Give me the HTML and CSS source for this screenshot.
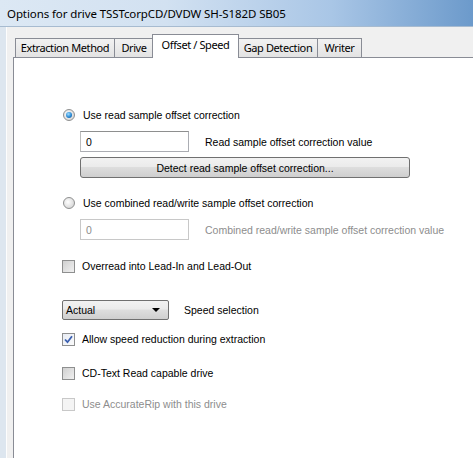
FILE: index.html
```html
<!DOCTYPE html>
<html>
<head>
<meta charset="utf-8">
<link rel="stylesheet" href="styles.css">
</head>
<body>
<div class="window">
  <div class="titlebar"><span class="title">Options for drive TSSTcorpCD/DVDW SH-S182D SB05</span></div>
  <div class="frame">
    <div class="tabs">
      <div class="tab t1">Extraction Method</div>
      <div class="tab t2">Drive</div>
      <div class="tab active">Offset / Speed</div>
      <div class="tab t4">Gap Detection</div>
      <div class="tab t5">Writer</div>
    </div>
    <div class="panel">
      <div class="row r-radio1">
        <span class="radio checked"><span class="dot"></span></span>
        <span class="label">Use read sample offset correction</span>
      </div>
      <div class="row r-input1">
        <div class="input">0</div>
        <span class="label side">Read sample offset correction value</span>
      </div>
      <div class="row r-button">
        <div class="button">Detect read sample offset correction...</div>
      </div>
      <div class="row r-radio2">
        <span class="radio"></span>
        <span class="label">Use combined read/write sample offset correction</span>
      </div>
      <div class="row r-input2">
        <div class="input disabled">0</div>
        <span class="label side grey">Combined read/write sample offset correction value</span>
      </div>
      <div class="row r-check1">
        <span class="check"></span>
        <span class="label">Overread into Lead-In and Lead-Out</span>
      </div>
      <div class="row r-select">
        <div class="select"><span>Actual</span><span class="arrow"></span></div>
        <span class="label sel">Speed selection</span>
      </div>
      <div class="row r-check2">
        <span class="check checked"><svg width="9" height="9" viewBox="0 0 9 9"><path d="M1 4.5 L3.5 7.2 L8 1.2" fill="none" stroke="#3a5fb0" stroke-width="1.8"/></svg></span>
        <span class="label">Allow speed reduction during extraction</span>
      </div>
      <div class="row r-check3">
        <span class="check"></span>
        <span class="label">CD-Text Read capable drive</span>
      </div>
      <div class="row r-check4">
        <span class="check disabled"></span>
        <span class="label grey">Use AccurateRip with this drive</span>
      </div>
    </div>
  </div>
</div>
</body>
</html>
```

FILE: styles.css
```css
html, body {
  margin: 0;
  padding: 0;
  width: 473px;
  height: 458px;
  overflow: hidden;
  background: #f0f0f0;
}
.window {
  width: 473px;
  height: 458px;
  display: flex;
  flex-direction: column;
}
.titlebar {
  height: 27px;
  box-sizing: border-box;
  background: linear-gradient(to right, #dce8f4 0%, #d2e1f1 35%, #a9c6e6 70%, #6c9acb 100%);
  border-bottom: 1px solid #a7bbd0;
  padding-left: 7px;
  display: flex;
  align-items: center;
}
.title {
  font-family: "Noto Sans", sans-serif;
  font-size: 11.5px;
  color: #000;
  padding-top: 1px;
  letter-spacing: -0.1px;
}
.frame {
  flex: 1;
  display: flex;
  flex-direction: column;
  background: #f0f0f0;
  border-left: 1px solid #fdfdfd;
  margin-left: 6px;
  box-shadow: -6px 0 0 #dde6ef;
}
.tabs {
  display: flex;
  align-items: flex-end;
  padding-left: 8px;
  padding-top: 7px;
  height: 23px;
  box-sizing: content-box;
  position: relative;
  z-index: 2;
}
.tab {
  font-family: "Noto Sans", sans-serif;
  font-size: 11px;
  letter-spacing: -0.4px;
  white-space: nowrap;
  color: #000;
  height: 19px;
  box-sizing: border-box;
  border: 1px solid #898c95;
  border-bottom: none;
  background: linear-gradient(#f2f2f2, #e3e3e3);
  display: flex;
  align-items: center;
  justify-content: center;
  margin-right: -1px;
  line-height: 1;
  padding-bottom: 1px;
}
.t1 { width: 100px; }
.t2 { width: 40px; }
.t4 { width: 80px; }
.t5 { width: 45px; }
.tab.active {
  width: 87px;
  height: 24px;
  background: #fff;
  margin-bottom: -1px;
  margin-left: -1px;
  margin-right: -1px;
  align-items: flex-start;
  padding-top: 4px;
  position: relative;
  z-index: 3;
}
.panel {
  flex: 1;
  margin-left: 6px;
  background: #fff;
  border-left: 1px solid #898c95;
  border-top: 1px solid #898c95;
  display: flex;
  flex-direction: column;
  position: relative;
  z-index: 1;
  font-family: "Liberation Sans", sans-serif;
  font-size: 10.5px;
  color: #000;
}
.row {
  display: flex;
  align-items: center;
  padding-left: 48px;
}
.label { white-space: nowrap; }
.grey { color: #8d8d8d; }
.r-radio1 { margin-top: 50px; height: 14px; }
.r-radio1 .label, .r-radio2 .label { margin-left: 8px; }
.r-input1 { margin-top: 9px; padding-left: 66px; }
.input {
  width: 109px;
  height: 21px;
  box-sizing: border-box;
  border: 1px solid #abadb3;
  border-top-color: #8e8f8f;
  border-left-color: #bcbcbc;
  background: #fff;
  padding-left: 5px;
  display: flex;
  align-items: center;
}
.input.disabled { color: #8d8d8d; border-color: #c8c8c8; }
.side { margin-left: 16px; }
.r-button { margin-top: 5px; padding-left: 66px; }
.button {
  width: 330px;
  height: 21px;
  box-sizing: border-box;
  border: 1px solid #707070;
  border-radius: 3px;
  background: linear-gradient(#f2f2f2 0%, #ebebeb 45%, #dddddd 50%, #cfcfcf 100%);
  display: flex;
  align-items: center;
  justify-content: center;
}
.r-radio2 { margin-top: 18px; height: 14px; }
.r-input2 { margin-top: 9px; padding-left: 66px; }
.r-check1 { margin-top: 19px; height: 14px; }
.r-select { margin-top: 27px; }
.r-check2 { margin-top: 12px; height: 14px; }
.r-check3 { margin-top: 20px; height: 14px; }
.r-check4 { margin-top: 17px; height: 14px; }
.radio {
  width: 12px;
  height: 12px;
  box-sizing: border-box;
  border-radius: 50%;
  border: 1px solid #8e8f8f;
  background: radial-gradient(circle at 40% 40%, #ffffff 0%, #e0e0e0 60%, #cdcdcd 100%);
  display: flex;
  align-items: center;
  justify-content: center;
  margin-left: 1px;
}
.dot {
  width: 6px;
  height: 6px;
  border-radius: 50%;
  background: radial-gradient(circle at 40% 35%, #9fdcff 0%, #2a8ad4 55%, #0d4a8a 100%);
}
.check {
  width: 13px;
  height: 13px;
  box-sizing: border-box;
  border: 1px solid #8e8f8f;
  background: linear-gradient(135deg, #d0d0d0, #f0f0f0);
  display: flex;
  align-items: center;
  justify-content: center;
}
.check.checked { background: linear-gradient(135deg, #e8ecf4, #fafafa); }
.check.disabled { border-color: #c8c8c8; background: #f4f4f4; }
.r-check1 .label, .r-check2 .label, .r-check3 .label, .r-check4 .label { margin-left: 7px; }
.select {
  width: 107px;
  height: 20px;
  box-sizing: border-box;
  border: 1px solid #707070;
  border-radius: 2px;
  background: linear-gradient(#f2f2f2 0%, #ebebeb 45%, #dddddd 50%, #cfcfcf 100%);
  display: flex;
  align-items: center;
  justify-content: space-between;
  padding-left: 3px;
  padding-right: 8px;
}
.arrow {
  width: 0;
  height: 0;
  border-left: 4px solid transparent;
  border-right: 4px solid transparent;
  border-top: 4px solid #000;
}
.sel { margin-left: 15px; }
```
